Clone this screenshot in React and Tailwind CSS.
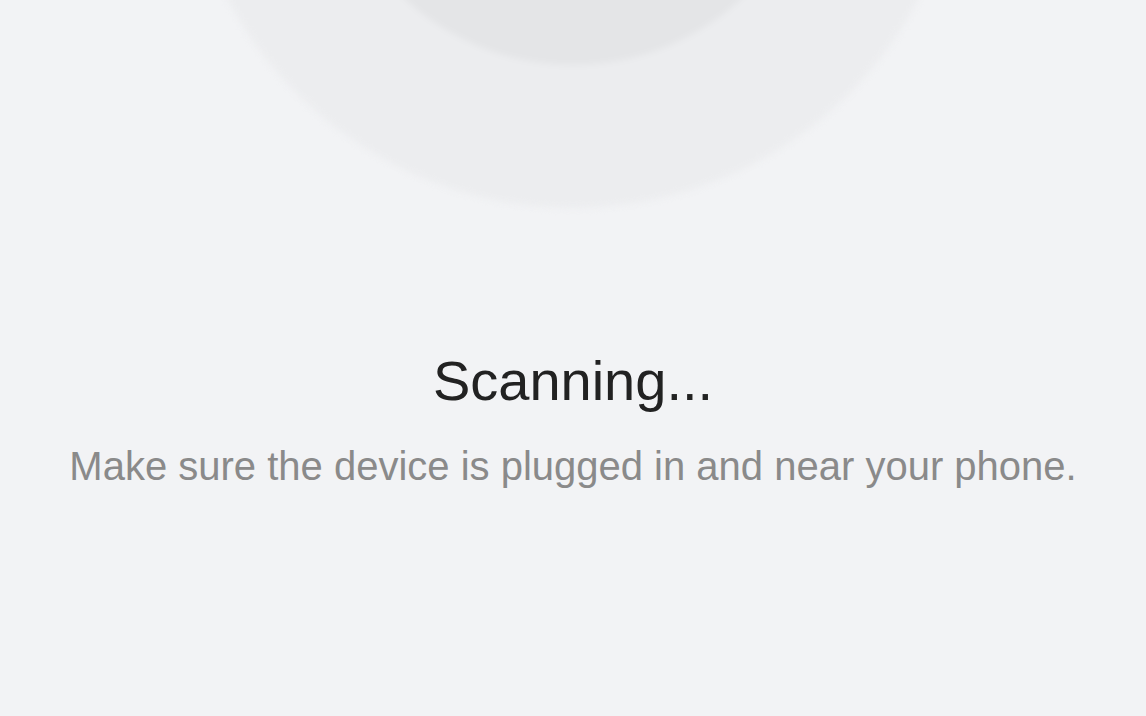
export default function App() {
    return (
        <div
            className="h-[716px] w-full overflow-hidden bg-[#f2f3f5] flex flex-col items-center"
            style={{ fontFamily: '"Liberation Sans", Arial, sans-serif' }}
        >
            {/* device pulse rings */}
            <div className="mt-[-572px] w-[780px] h-[780px] shrink-0 rounded-full bg-[#ecedef] blur-[3px] flex items-center justify-center">
                <div className="w-[494px] h-[494px] rounded-full bg-[#e4e5e7]" />
            </div>

            <h1 className="mt-[141px] text-[56px] leading-[64px] text-[#222222] font-normal">
                Scanning...
            </h1>
            <p className="mt-[29px] text-[40px] leading-[48px] text-[#8a8a8a] whitespace-nowrap">
                Make sure the device is plugged in and near your phone.
            </p>
        </div>
    );
}
